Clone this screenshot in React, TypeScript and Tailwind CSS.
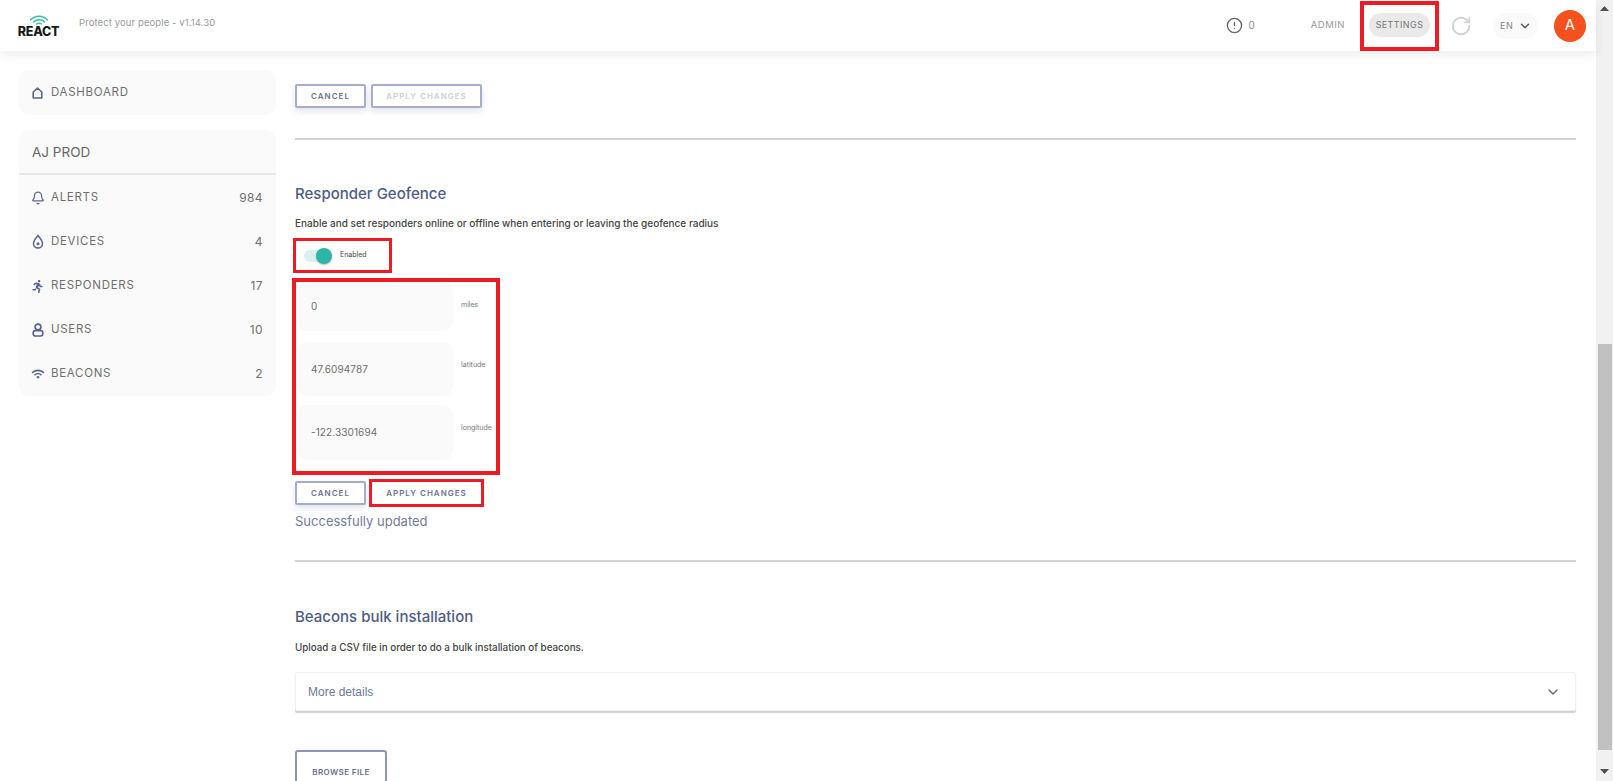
import React from "react";
import { Bell, ChevronDown, RotateCw, CircleAlert } from "lucide-react";
import { FaRunning } from "react-icons/fa";
import { MdWifi } from "react-icons/md";

function DeviceIcon() {
  return (
    <svg width="14" height="16" viewBox="0 0 14 16" fill="none" stroke="#5a6690" strokeWidth="1.5">
      <path d="M7 1.5C4.5 4.5 2.5 6.8 2.5 9.6a4.5 4.5 0 0 0 9 0C11.5 6.8 9.5 4.5 7 1.5Z" />
      <circle cx="7" cy="9.8" r="1.5" fill="#5a6690" stroke="none" />
    </svg>
  );
}

function HomeIcon() {
  return (
    <svg width="11" height="12" viewBox="0 0 11 12" fill="none" stroke="#5a6690" strokeWidth="1.6" strokeLinejoin="round">
      <path d="M1.2 11V5L5.5 1.2L9.8 5V11Z" />
    </svg>
  );
}

function UserIcon() {
  return (
    <svg width="12" height="14" viewBox="0 0 12 14" fill="none" stroke="#5a6690" strokeWidth="1.7">
      <circle cx="6" cy="4" r="2.9" />
      <rect x="1.2" y="7.6" width="9.6" height="5.4" rx="2.2" />
    </svg>
  );
}

function Row({ icon, label, count }: { icon: React.ReactNode; label: string; count: string }) {
  return (
    <div className="h-[44px] pt-[2px] flex items-center pl-[9px] pr-[13px]">
      <div className="w-[19px] flex justify-center">{icon}</div>
      <span className="ml-[4px] text-[11.5px] tracking-[0.7px] text-[#6f6f6f]">{label}</span>
      <span className="ml-auto text-[12px] tracking-[0.4px] text-[#6f6f6f]">{count}</span>
    </div>
  );
}

function Btn({ label, disabled, w }: { label: string; disabled?: boolean; w: string }) {
  return (
    <div className={`${w} h-[24px] rounded-[2px] border-2 border-[#a4adc9] bg-white shadow-[0_3px_6px_rgba(90,102,144,0.18)] flex items-center justify-center text-[8px] font-semibold tracking-[1px] ${disabled ? "text-[#cfcfcf]" : "text-[#6b7290]"}`}>
      {label}
    </div>
  );
}

function Field({ value, label, h, mt, labelTop }: { value: string; label: string; h: string; mt: string; labelTop: string }) {
  return (
    <div className={`flex ${mt}`}>
      <div className={`w-[156px] ${h} rounded-[10px] bg-[#fafafa] flex items-center pl-[14px] text-[10px] tracking-[0.1px] text-[#6f6f6f]`}>{value}</div>
      <div className={`ml-[8px] text-[7px] text-[#777] ${labelTop}`}>{label}</div>
    </div>
  );
}

export default function App() {
  return (
    <div className="flex h-[781px] w-[1613px] overflow-hidden bg-white" style={{ fontFamily: "Inter, 'Open Sans', sans-serif" }}>
      <div className="w-[1596px] flex flex-col">
        <header className="h-[51px] shrink-0 flex items-center bg-white shadow-[0_4px_10px_rgba(0,0,0,0.07)] z-10">
          <div className="ml-[18px] w-[41px] flex flex-col items-center">
            <svg width="20" height="11" viewBox="0 0 20 11" fill="none" stroke="#3dbdaa" strokeWidth="1.4" strokeLinecap="round">
              <path d="M1.5 6C6 1 14 1 18.5 6" />
              <path d="M4.5 8C7.5 5 12.5 5 15.5 8" />
              <path d="M7.5 10C9 9 11 9 12.5 10" />
            </svg>
            <span className="text-[12.5px] leading-[13px] font-extrabold text-[#1a1a1a] tracking-[-0.2px]">REACT</span>
          </div>
          <span className="ml-[20px] mb-[5px] text-[9.5px] tracking-[0.1px] text-[#9a9a9a]">Protect your people - v1.14.30</span>
          <div className="ml-auto flex items-center">
            <CircleAlert size={17} strokeWidth={1.9} className="text-[#666]" />
            <span className="ml-[5px] text-[10px] text-[#888]">0</span>
            <span className="ml-[56px] text-[9.5px] tracking-[0.5px] text-[#999]">ADMIN</span>
            <div className="ml-[15px] w-[79px] h-[50px] border-[4px] border-[#ed1c24] flex items-center justify-center">
              <div className="w-[61px] h-[24px] mb-[2px] rounded-full bg-[#e9e9e9] flex items-center justify-center text-[9px] tracking-[0.4px] text-[#777]">SETTINGS</div>
            </div>
            <RotateCw size={22} strokeWidth={2} className="ml-[11px] text-[#d2d2d2]" />
            <div className="ml-[21px] w-[45px] h-[26px] rounded-full bg-[#fafafa] flex items-center pl-[7px] text-[9px] tracking-[0.6px] text-[#888]">
              EN
              <ChevronDown size={14} strokeWidth={2.4} className="ml-[5px] text-[#555]" />
            </div>
            <div className="ml-[16px] mr-[10px] w-[32px] h-[32px] rounded-full bg-[#f4511e] flex items-center justify-center text-[15px] text-white">A</div>
          </div>
        </header>
        <div className="flex flex-1 min-h-0 overflow-hidden">
          <aside className="ml-[19px] w-[257px] shrink-0 pt-[19px]">
            <div className="h-[45px] pt-[1px] rounded-[10px] bg-[#fafafa] flex items-center pl-[9px]">
              <div className="w-[19px] flex justify-center"><HomeIcon /></div>
              <span className="ml-[4px] text-[11.5px] tracking-[0.7px] text-[#6f6f6f]">DASHBOARD</span>
            </div>
            <div className="mt-[15px] pb-[1px] rounded-[10px] bg-[#fafafa]">
              <div className="h-[45px] pt-[1px] border-b-2 border-[#e8e8e8] flex items-center pl-[13px] text-[13.5px] text-[#666]">AJ PROD</div>
              <Row icon={<Bell size={14} strokeWidth={2.2} className="text-[#5a6690]" />} label="ALERTS" count="984" />
              <Row icon={<DeviceIcon />} label="DEVICES" count="4" />
              <Row icon={<FaRunning size={13} className="text-[#5a6690]" />} label="RESPONDERS" count="17" />
              <Row icon={<UserIcon />} label="USERS" count="10" />
              <Row icon={<MdWifi size={14} className="text-[#5a6690]" />} label="BEACONS" count="2" />
            </div>
          </aside>
          <main className="ml-[19px] w-[1281px] shrink-0 pt-[33px]">
            <div className="flex gap-[5px]">
              <Btn label="CANCEL" w="w-[71px]" />
              <Btn label="APPLY CHANGES" w="w-[111px]" disabled />
            </div>
            <div className="mt-[30px] h-[2px] bg-[#d2d2d2]" />
            <h2 className="mt-[44px] text-[15px] leading-[20px] font-medium text-[#515c85]">Responder Geofence</h2>
            <p className="mt-[12px] text-[10px] leading-[14px] font-medium text-[#444]">Enable and set responders online or offline when entering or leaving the geofence radius</p>
            <div className="mt-[8px] ml-[-2px] w-[99px] h-[35px] border-[3px] border-[#ed1c24] flex items-center pl-[8px]">
              <div className="relative w-[26px] h-[12px] rounded-full bg-[#d9f1ee]">
                <div className="absolute right-[-2px] top-[-2px] w-[16px] h-[16px] rounded-full bg-[#2db5a5] shadow-[0_1px_2px_rgba(0,0,0,0.25)]" />
              </div>
              <span className="ml-[10px] text-[7px] text-[#444]">Enabled</span>
            </div>
            <div className="mt-[5px] ml-[-3px] w-[208px] h-[197px] border-[4px] border-[#ed1c24] pl-[1px]">
              <Field value="0" label="miles" h="h-[49px]" mt="mt-0" labelTop="mt-[18px]" />
              <Field value="47.6094787" label="latitude" h="h-[54px]" mt="mt-[11px]" labelTop="mt-[18px]" />
              <Field value="-122.3301694" label="longitude" h="h-[55px]" mt="mt-[9px]" labelTop="mt-[18px]" />
            </div>
            <div className="mt-[4px] flex items-center">
              <Btn label="CANCEL" w="w-[71px]" />
              <div className="ml-[3px] w-[115px] h-[28px] border-[3px] border-[#ed1c24] flex items-center justify-center text-[8px] font-semibold tracking-[1px] text-[#6b7290]">APPLY CHANGES</div>
            </div>
            <p className="mt-[5px] text-[13px] leading-[18px] text-[#747b99]">Successfully updated</p>
            <div className="mt-[30px] h-[2px] bg-[#d2d2d2]" />
            <h2 className="mt-[45px] text-[15px] leading-[20px] font-medium text-[#515c85]">Beacons bulk installation</h2>
            <p className="mt-[14px] text-[9.8px] leading-[14px] font-medium text-[#444]">Upload a CSV file in order to do a bulk installation of beacons.</p>
            <div className="mt-[17px] h-[39px] rounded-[2px] bg-white border border-[#f0f0f0] shadow-[0_2px_1px_rgba(0,0,0,0.18)] flex items-center pl-[12px] pr-[14px]">
              <span className="text-[12px] text-[#6f789c]" style={{ fontFamily: "'Liberation Sans', sans-serif" }}>More details</span>
              <ChevronDown size={16} strokeWidth={2} className="ml-auto text-[#666]" />
            </div>
            <div className="mt-[39px] w-[92px] h-[44px] rounded-[3px] border-2 border-[#8b95b8] flex items-center justify-center text-[8px] font-semibold tracking-[0.4px] text-[#6b7290] shrink-0">BROWSE FILE</div>
          </main>
        </div>
      </div>
      <div className="w-[17px] shrink-0 bg-[#f1f1f1] flex flex-col items-center">
        <svg width="9" height="5" viewBox="0 0 9 5" className="mt-[6px] shrink-0"><path d="M4.5 0L9 5H0Z" fill="#505050" /></svg>
        <div className="mt-[333px] w-[14px] h-[406px] shrink-0 bg-[#c1c1c1]" />
        <svg width="9" height="5" viewBox="0 0 9 5" className="mt-[19px] shrink-0"><path d="M4.5 5L9 0H0Z" fill="#505050" /></svg>
      </div>
    </div>
  );
}
